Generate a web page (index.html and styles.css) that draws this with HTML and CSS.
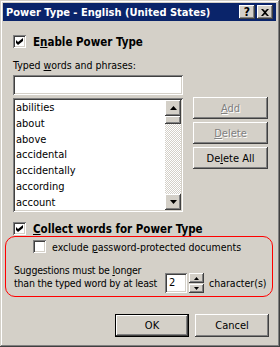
FILE: index.html
```html
<!DOCTYPE html>
<html>
	<head>
		<meta charset="utf-8">
		<title>Power Type - English (United States)</title>
		<link rel="stylesheet" href="styles.css">
	</head>
	<body>
		<div class="win">
			<div class="titlebar">
				<span class="title">Power Type - English (United States)</span>
				<div class="tbtns">
					<span class="tbtn">?</span>
					<span class="tbtn">
						<svg width="8" height="7" viewBox="0 0 8 7"><path d="M0 0h2l2 2 2-2h2L5 3.5 8 7H6L4 5 2 7H0l3-3.5z" fill="#000"/></svg>
					</span>
				</div>
			</div>

			<div class="main">
				<div class="check bold">
					<span class="box"><svg width="7" height="7" viewBox="0 0 7 7"><path d="M0 2l2 2 5-4v3L2 7 0 5z" fill="#000"/></svg></span>
					<span>E<u>n</u>able Power Type</span>
				</div>

				<div class="lbl">Typed <u>w</u>ords and phrases:</div>

				<div class="words">
					<div class="left">
						<div class="field"></div>
						<div class="list">
							<ul class="items">
								<li>abilities</li>
								<li>about</li>
								<li>above</li>
								<li>accidental</li>
								<li>accidentally</li>
								<li>according</li>
								<li>account</li>
							</ul>
							<div class="sb">
								<div class="sb-btn"><svg width="7" height="4" viewBox="0 0 7 4"><path d="M3.5 0L7 4H0z" fill="#000"/></svg></div>
								<div class="thumb"></div>
								<div class="track"></div>
								<div class="sb-btn"><svg width="7" height="4" viewBox="0 0 7 4"><path d="M0 0h7L3.5 4z" fill="#000"/></svg></div>
							</div>
						</div>
					</div>
					<div class="side">
						<button class="btn off"><u>A</u>dd</button>
						<button class="btn off"><u>D</u>elete</button>
						<button class="btn">De<u>l</u>ete All</button>
					</div>
				</div>

				<div class="check bold collect">
					<span class="box"><svg width="7" height="7" viewBox="0 0 7 7"><path d="M0 2l2 2 5-4v3L2 7 0 5z" fill="#000"/></svg></span>
					<span><u>C</u>ollect words for Power Type</span>
				</div>

				<div class="group">
					<div class="check excl">
						<span class="box"></span>
						<span>exclude <u>p</u>assword-protected documents</span>
					</div>
					<div class="suggest">
						<div class="stext">Suggestions must be <u>l</u>onger<br>than the typed word by at least</div>
						<div class="spin">
							<div class="spin-field">2</div>
							<div class="spin-btns">
								<div class="spin-btn"><svg width="5" height="3" viewBox="0 0 5 3"><path d="M2.5 0L5 3H0z" fill="#000"/></svg></div>
								<div class="spin-btn"><svg width="5" height="3" viewBox="0 0 5 3"><path d="M0 0h5L2.5 3z" fill="#000"/></svg></div>
							</div>
						</div>
						<span class="unit">character(s)</span>
					</div>
				</div>

				<div class="actions">
					<button class="btn wide default">OK</button>
					<button class="btn wide">Cancel</button>
				</div>
			</div>
		</div>
	</body>
</html>
```

FILE: styles.css
```css
body {
	margin: 0;
	background: #D4D0C8;
	font-family: "DejaVu Sans Condensed", "DejaVu Sans", sans-serif;
	font-size: 10.5px;
	color: #000;
}

u {
	text-decoration: underline;
	text-underline-offset: 1px;
}

.win {
	width: 280px;
	height: 347px;
	box-sizing: border-box;
	padding: 3px 4px 4px 3px;
	background: #D4D0C8;
	box-shadow: inset -1px -1px #404040, inset 1px 1px #D4D0C8, inset -2px -2px #808080, inset 2px 2px #fff;
	display: flex;
	flex-direction: column;
}

/* title bar */
.titlebar {
	height: 18px;
	background: #0A246A;
	color: #fff;
	font-size: 11px;
	font-weight: bold;
	display: flex;
	align-items: center;
	justify-content: space-between;
	padding: 0 3px;
}

.tbtns {
	display: flex;
	gap: 2px;
}

.tbtn {
	width: 16px;
	height: 14px;
	box-sizing: border-box;
	background: #D4D0C8;
	color: #000;
	font-size: 12px;
	display: flex;
	align-items: center;
	justify-content: center;
	box-shadow: inset -1px -1px #404040, inset 1px 1px #fff, inset -2px -2px #808080, inset 2px 2px #D4D0C8;
}

/* dialog body */
.main {
	flex: 1;
	padding: 14px 0 0 10px;
	display: flex;
	flex-direction: column;
}

.bold {
	font-weight: bold;
	font-size: 11.5px;
}

.check {
	display: flex;
	align-items: center;
	height: 13px;
	gap: 7px;
	white-space: nowrap;
}

.box {
	width: 13px;
	height: 13px;
	flex-shrink: 0;
	box-sizing: border-box;
	background: #fff;
	display: flex;
	align-items: center;
	justify-content: center;
	box-shadow: inset 1px 1px #808080, inset -1px -1px #fff, inset 2px 2px #404040, inset -2px -2px #D4D0C8;
}

.lbl {
	margin-top: 11px;
	line-height: 13px;
}

.words {
	display: flex;
	gap: 10px;
	margin-top: 3px;
}

.left {
	width: 170px;
	display: flex;
	flex-direction: column;
	gap: 3px;
}

.field, .list, .spin-field {
	box-sizing: border-box;
	background: #fff;
	box-shadow: inset 1px 1px #808080, inset -1px -1px #fff, inset 2px 2px #404040, inset -2px -2px #D4D0C8;
}

.field {
	height: 20px;
}

.list {
	height: 114px;
	padding: 2px;
	display: flex;
}

.items {
	flex: 1;
	list-style: none;
	margin: 0;
	padding: 0 0 0 1px;
	line-height: 15.8px;
	font-size: 11px;
	overflow: hidden;
}

.sb {
	width: 16px;
	display: flex;
	flex-direction: column;
}

.sb-btn, .thumb, .spin-btn, .btn {
	box-sizing: border-box;
	background: #D4D0C8;
	box-shadow: inset -1px -1px #404040, inset 1px 1px #fff, inset -2px -2px #808080, inset 2px 2px #D4D0C8;
}

.sb-btn {
	height: 16px;
	display: flex;
	align-items: center;
	justify-content: center;
}

.thumb {
	height: 8px;
}

.track {
	flex: 1;
	background: repeating-conic-gradient(#fff 0 25%, #D4D0C8 0 50%) 0 0 / 2px 2px;
}

.side {
	display: flex;
	flex-direction: column;
	gap: 3px;
	margin-top: 22px;
}

.btn {
	width: 75px;
	height: 22px;
	border: 0;
	padding: 0;
	font-family: inherit;
	font-size: 11px;
	color: #000;
}

.btn.off {
	color: #808080;
	text-shadow: 1px 1px #fff;
}

.collect {
	margin-top: 10px;
}

/* the red outlined section */
.group {
	margin: 1px 0 0 -8px;
	width: 268px;
	box-sizing: border-box;
	border: 1px solid #f00;
	border-radius: 10px;
	padding: 3px 0;
}

.excl {
	padding-left: 27px;
	gap: 6px;
}

.suggest {
	display: flex;
	align-items: flex-end;
	margin-top: 11px;
	padding-left: 8px;
	white-space: nowrap;
}

.stext {
	line-height: 13px;
	margin-bottom: 3px;
	letter-spacing: -0.2px;
	flex-shrink: 0;
}

.spin {
	display: flex;
	gap: 2px;
	margin-left: 8px;
	flex-shrink: 0;
}

.spin-field {
	width: 22px;
	height: 20px;
	padding: 0 0 0 4px;
	line-height: 20px;
	font-size: 11px;
}

.spin-btns {
	display: flex;
	flex-direction: column;
	gap: 1px;
}

.spin-btn {
	width: 15px;
	height: 10px;
	display: flex;
	align-items: center;
	justify-content: center;
}

.spin-btn + .spin-btn {
	height: 9px;
}

.unit {
	margin: 0 0 3px 5px;
	line-height: 13px;
}

.actions {
	display: flex;
	justify-content: flex-end;
	gap: 6px;
	margin-top: 17px;
	padding-right: 7px;
}

.btn.wide {
	width: 74px;
	height: 23px;
}

.btn.default {
	box-shadow: inset 0 0 0 1px #000, inset -2px -2px #404040, inset 2px 2px #fff, inset -3px -3px #808080;
}
```
